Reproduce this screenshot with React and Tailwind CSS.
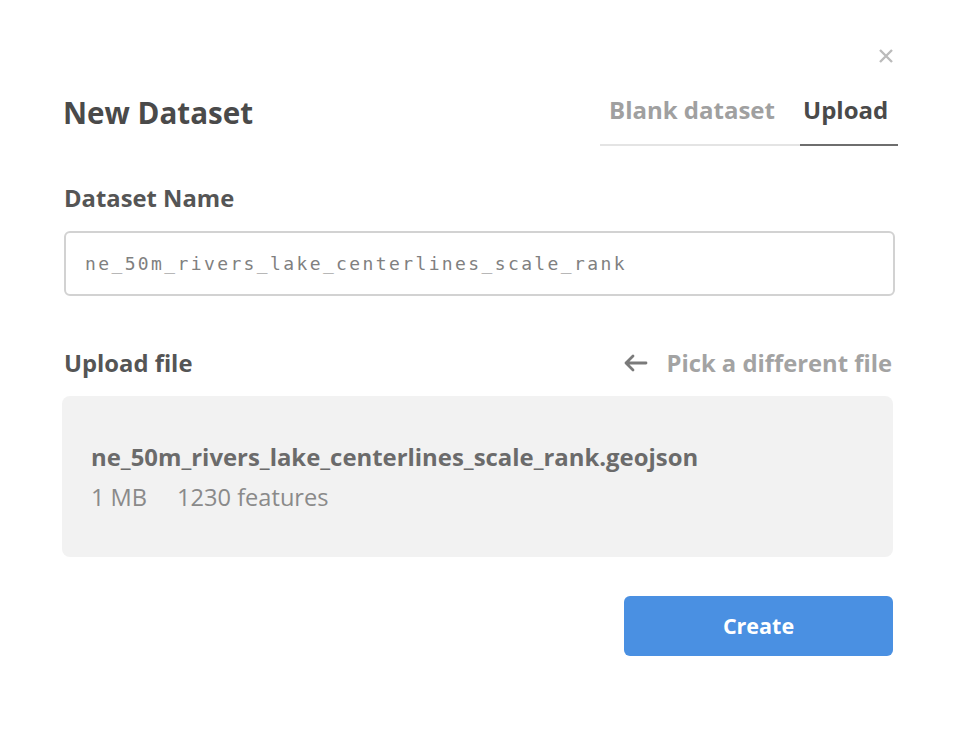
import React from 'react';

const NewDatasetModal = () => {
  return (
    <div className="w-[960px] h-[730px] bg-white relative" style={{ fontFamily: '"Open Sans", "Liberation Sans", sans-serif' }}>
      <button className="absolute top-[44px] left-[874px] w-[24px] h-[24px] flex items-center justify-center text-[#bbbbbb]">
        <svg width="16" height="16" viewBox="0 0 16 16" fill="none" stroke="currentColor" strokeWidth="2.4" strokeLinecap="butt">
          <path d="M2 2 L14 14 M14 2 L2 14" />
        </svg>
      </button>

      <div className="pl-[64px] pr-[65px] pt-[92px]">
        {/* Header */}
        <div className="flex items-start justify-between">
          <h1 className="text-[29.6px] leading-[40px] font-bold text-[#4a4a4a] mt-[1px] ml-[-1px]">New Dataset</h1>
          <div className="flex mr-[-3px]">
            <div className="w-[200px] pl-[9px] border-b-2 border-[#e4e4e4] pb-[16px] text-[24px] leading-[36px] font-bold text-[#a0a0a0]">
              Blank dataset
            </div>
            <div className="w-[98px] pl-[3px] border-b-2 border-[#6e6e6e] pb-[16px] text-[24px] leading-[36px] font-bold text-[#4a4a4a]">
              Upload
            </div>
          </div>
        </div>

        {/* Dataset name */}
        <label className="block mt-[36px] text-[23.8px] leading-[32px] font-bold text-[#555555]">Dataset Name</label>
        <div className="mt-[17px] h-[65px] border-2 border-[#d2d2d2] rounded-[6px] flex items-center pl-[19px]">
          <span className="text-[18px] tracking-[2.38px] text-[#808080]" style={{ fontFamily: '"DejaVu Sans Mono", "Liberation Mono", monospace' }}>
            ne_50m_rivers_lake_centerlines_scale_rank
          </span>
        </div>

        {/* Upload file */}
        <div className="mt-[51px] flex items-center justify-between">
          <span className="text-[23.8px] leading-[32px] font-bold text-[#555555]">Upload file</span>
          <button className="flex items-center gap-[17px] mr-[3px] text-[23.8px] leading-[32px] font-bold text-[#a3a3a3]">
            <svg width="26" height="20" viewBox="0 0 26 20" fill="none" stroke="#7a7a7a" strokeWidth="2.8" strokeLinecap="round" strokeLinejoin="round">
              <path d="M23 10 H3 M10 3 L3 10 L10 17" />
            </svg>
            Pick a different file
          </button>
        </div>
        <div className="mt-[17px] mr-[2px] ml-[-2px] h-[161px] bg-[#f2f2f2] rounded-[8px] px-[29px] flex flex-col justify-center">
          <div className="text-[23.9px] leading-[32px] font-bold text-[#6b6b6b]">ne_50m_rivers_lake_centerlines_scale_rank.geojson</div>
          <div className="mt-[9px] text-[23.6px] leading-[30px] text-[#8a8a8a]">
            <span>1 MB</span>
            <span className="ml-[30px]">1230 features</span>
          </div>
        </div>

        {/* Footer */}
        <div className="mt-[39px] flex justify-end mr-[2px]">
          <button className="w-[269px] h-[60px] rounded-[6px] bg-[#4a90e2] text-white text-[21.5px] font-bold">
            Create
          </button>
        </div>
      </div>
    </div>
  );
};

export default function App() {
  return <NewDatasetModal />;
}
